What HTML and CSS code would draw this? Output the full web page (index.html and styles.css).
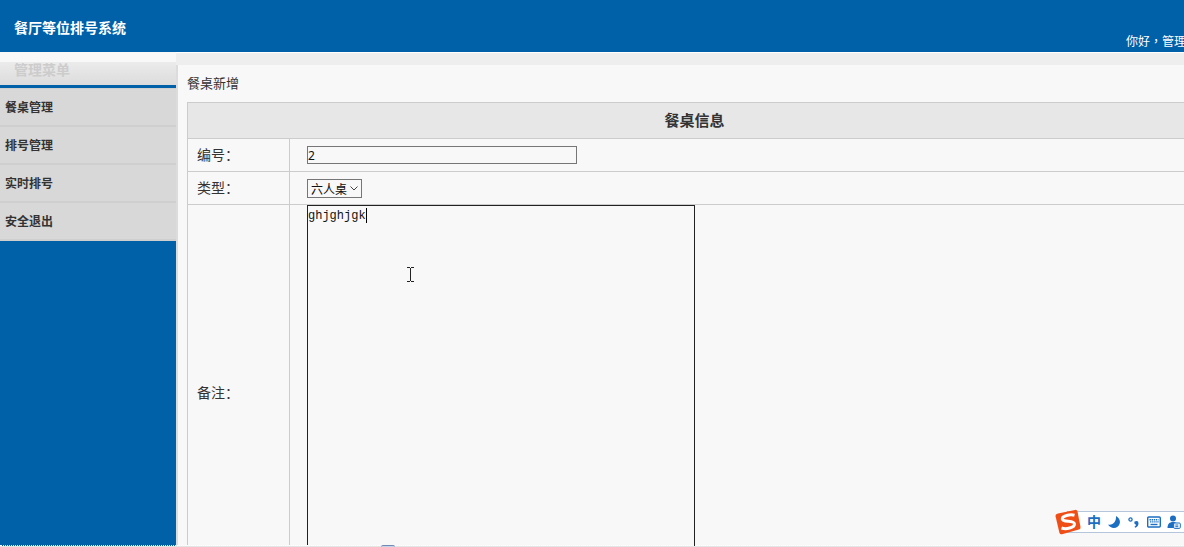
FILE: index.html
```
<!DOCTYPE html>
<html lang="zh-CN">
<head>
    <meta charset="UTF-8" />
    <meta name="viewport" content="width=device-width, initial-scale=1.0" />
    <title>餐厅等位排号系统</title>
    <link rel="stylesheet" href="styles.css">
</head>
<body>
    <div class="page">
        <header class="top-bar">
            <h1>餐厅等位排号系统</h1>
            <span class="welcome" lang="zh-TW">你好，管理员</span>
        </header>

        <div class="layout">
            <nav class="sidebar">
                <h2>管理菜单</h2>
                <ul>
                    <li><a href="#tables">餐桌管理</a></li>
                    <li><a href="#numbers">排号管理</a></li>
                    <li><a href="#live">实时排号</a></li>
                    <li><a href="#logout">安全退出</a></li>
                </ul>
            </nav>

            <main class="content">
                <div class="strip"></div>
                <form class="panel">
                    <p class="crumb">餐桌新增</p>
                    <table class="form-table">
                        <thead>
                            <tr><th colspan="2">餐桌信息</th></tr>
                        </thead>
                        <tbody>
                            <tr>
                                <td class="label"><label for="tableNo">编号：</label></td>
                                <td><input type="text" id="tableNo" value="2" /></td>
                            </tr>
                            <tr>
                                <td class="label"><label for="tableType">类型：</label></td>
                                <td>
                                    <div class="select-box">
                                        <select id="tableType">
                                            <option>六人桌</option>
                                        </select>
                                        <svg class="arrow" viewBox="0 0 8 5"><path d="M.5.5 4 4 7.5.5" /></svg>
                                    </div>
                                </td>
                            </tr>
                            <tr>
                                <td class="label"><label for="remark">备注：</label></td>
                                <td class="note-cell">
                                    <div class="note-box">
                                        <textarea id="remark" spellcheck="false">ghjghjgk</textarea>
                                        <span class="caret"></span>
                                        <svg class="pointer" viewBox="0 0 7 15"><path d="M0 .5h3M4 .5h3M3.5 1v13M0 14.5h3M4 14.5h3" /></svg>
                                    </div>
                                </td>
                            </tr>
                        </tbody>
                    </table>
                </form>
            </main>
        </div>
    </div>

    <div class="bottom-tab"></div>
    <div class="bottom-line"></div>

    <!-- input method toolbar -->
    <div class="ime">
        <svg class="ime-logo" viewBox="0 0 26 26">
            <path d="M3 4.500 20 .9q2-.4 2.500 1.600L25.500 18q.3 2-1.600 2.600L7 25.200q-2 .4-2.600-1.500L.6 7.500Q.2 5.200 3 4.500z" fill="#f04e17" />
            <path d="M19.500 6.200C15 5 7 6.800 7.300 10c.4 3.600 12.200 1 12.200 5 0 4-8.500 5.500-13 4" fill="none" stroke="#fff" stroke-width="3" />
        </svg>
        <span class="ime-lang">中</span>
        <svg class="ime-icon" viewBox="0 0 14 14"><path d="M9 1c5 3 5 8 1.500 10.800C7.500 14 3 13 1 9.500 5.500 10.800 9.500 7 9 1z" fill="#1b6ec2" /></svg>
        <svg class="ime-icon" viewBox="0 0 14 14">
            <circle cx="3.500" cy="4.500" r="1.600" fill="none" stroke="#1b6ec2" stroke-width="1.300" />
            <path d="M7.500 6.500q4-1.500 4 1.700 0 3-3.300 4.600l-.7-1q1.500-.9 1.600-2Q6.800 9.200 7.500 6.500z" fill="#1b6ec2" />
        </svg>
        <svg class="ime-icon" viewBox="0 0 14 14">
            <rect x=".7" y="2" width="12.600" height="10" rx="1" fill="#fff" stroke="#1b6ec2" stroke-width="1.400" />
            <path d="M2.500 4.700h9M3 6.900h9" stroke="#1b6ec2" stroke-width="1.400" stroke-dasharray="1.400 .7" />
            <path d="M3.500 9.500h7" stroke="#1b6ec2" stroke-width="1.400" />
        </svg>
        <svg class="ime-icon" viewBox="0 0 14 14">
            <circle cx="6" cy="3.500" r="3" fill="#1b6ec2" />
            <path d="M.5 13c0-4 2-6 5.500-6s5.500 2 5.500 6z" fill="#1b6ec2" />
            <rect x="6.700" y="8" width="6.600" height="5.400" rx="1" fill="#fff" stroke="#1b6ec2" />
            <path d="M8.300 10h3M8.300 11.700h3" stroke="#1b6ec2" />
        </svg>
    </div>
</body>
</html>
```

FILE: styles.css
```
:root {
    --blue: #0060a8;
    --panel: #f8f8f8;
    --line: #ccc;
    --ime: #1b6ec2;
}
* {
    box-sizing: border-box;
}
body {
    margin: 0;
    font-family: "Liberation Sans", "Noto Sans CJK SC", sans-serif;
    font-size: 12px;
    color: #333;
    background: var(--panel);
    overflow: hidden;
}
/* the page runs a little wider than the window */
.page {
    width: calc(100% + 18px);
    height: 100vh;
    display: flex;
    flex-direction: column;
    overflow: hidden;
}
.top-bar {
    flex: none;
    display: flex;
    justify-content: space-between;
    align-items: flex-end;
    height: 52px;
    padding: 0 4px 2px 14px;
    background: var(--blue);
    color: #fff;
}
.top-bar h1 {
    margin: 0;
    padding-bottom: 12px;
    font-size: 14px;
    line-height: 20px;
}
.welcome {
    font-family: "Noto Sans CJK TC", sans-serif;
    line-height: 18px;
}
.layout {
    flex: 1;
    display: flex;
    min-height: 0;
}
.sidebar {
    flex: none;
    width: 176px;
    background: var(--blue);
}
.sidebar h2 {
    margin: 0;
    height: 36px;
    padding: 0 14px;
    font-size: 14px;
    line-height: 36px;
    color: #ccc;
    background: linear-gradient(#f8f8f8 10px, #ebebeb 10px, #dcdcdc);
    border-bottom: 3px solid var(--blue);
}
.sidebar ul {
    margin: 0;
    padding: 0;
    list-style: none;
    border-top: 1px solid #cfcfcf;
}
.sidebar a {
    display: block;
    height: 38px;
    padding-left: 5px;
    line-height: 39px;
    font-weight: bold;
    color: #333;
    text-decoration: none;
    background: #d8d8d8;
    border-bottom: 2px solid #cfcfcf;
}
.content {
    flex: 1;
}
.strip {
    height: 13px;
    background: #eee;
    border-top: 1px solid #fff;
}
.panel {
    padding: 9px 0 0 9px;
    border-left: 2px solid #dcdcdc;
    background: var(--panel);
}
.crumb {
    margin: 0 0 8px;
    font-size: 13px;
    line-height: 20px;
}
.form-table {
    width: 100%;
    border-collapse: collapse;
    font-size: 14px;
}
.form-table th {
    height: 36px;
    padding: 0 0 2px;
    font-size: 15px;
    background: #e7e7e7;
    border: 1px solid var(--line);
}
.form-table td {
    height: 33px;
    padding: 0 17px;
    border: 1px solid var(--line);
}
.form-table td.label {
    width: 102px;
    padding: 0 9px 3px;
}
.form-table input,
.form-table select,
.form-table textarea {
    display: block;
    margin: 0;
    font-size: 12px;
    color: #111;
    background: transparent;
    border: 1px solid #767676;
    border-radius: 0;
    outline: none;
}
.form-table input {
    width: 270px;
    height: 18px;
    padding: 1px 0;
    font-family: "Noto Sans", sans-serif;
}
.select-box {
    position: relative;
    width: 55px;
}
.form-table select {
    width: 100%;
    height: 19px;
    padding: 0 3px;
    appearance: none;
    font-family: "Noto Sans CJK SC", sans-serif;
}
.arrow {
    position: absolute;
    right: 4px;
    top: 7px;
    width: 8px;
    height: 5px;
    fill: none;
    stroke: #444;
    pointer-events: none;
}
.note-box {
    position: relative;
    width: 388px;
}
.form-table textarea {
    width: 100%;
    height: 376px;
    padding: 2px 0;
    font-family: "Liberation Mono", "Noto Sans CJK SC", monospace;
    line-height: 16px;
    border-color: #222;
    resize: none;
}
.caret {
    position: absolute;
    left: 59px;
    top: 3px;
    width: 1px;
    height: 15px;
    background: #000;
}
.pointer {
    position: absolute;
    left: 100px;
    top: 62px;
    width: 7px;
    height: 15px;
    fill: none;
    stroke: #222;
}
.bottom-line {
    position: fixed;
    left: 0;
    right: 0;
    bottom: 0;
    height: 2px;
    border-top: 1px dotted #fff;
    background: #e4e4e4;
    background-clip: padding-box;
}
.bottom-tab {
    position: fixed;
    left: 381px;
    bottom: 0;
    width: 14px;
    height: 2px;
    z-index: 1;
    background: #c5d3e8;
    border-top: 1px solid #7189b5;
    border-radius: 3px 3px 0 0;
}
.ime {
    position: fixed;
    right: 0;
    bottom: 14px;
    display: flex;
    align-items: center;
    gap: 6px;
    width: 117px;
    height: 22px;
    color: var(--ime);
    background: #fff;
    border: 1px solid #b4c5dc;
    border-width: 1px 0;
}
.ime-logo {
    flex: none;
    width: 26px;
    height: 26px;
    margin-left: -12px;
}
.ime-lang {
    font-size: 14px;
    font-weight: bold;
    line-height: 20px;
}
.ime-icon {
    flex: none;
    width: 14px;
    height: 14px;
}
```
